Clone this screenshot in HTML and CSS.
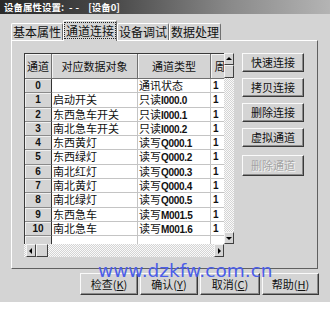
FILE: index.html
```html
<!DOCTYPE html>
<html>
<head>
<meta charset="utf-8">
<link rel="stylesheet" href="styles.css">
</head>
<body>
<div class="window">
  <div class="titlebar"><span>设备属性设置:</span><span class="dash">--</span><span>[设备0]</span></div>
  <div class="tabs">
    <div class="tab">基本属性</div>
    <div class="tab active"><span class="focus">通道连接</span></div>
    <div class="tab">设备调试</div>
    <div class="tab">数据处理</div>
  </div>
  <div class="panel">
    <div class="gridbox">
      <div class="table">
        <div class="h">通道</div><div class="h">对应数据对象</div><div class="h">通道类型</div><div class="h">周期</div>
        <div class="n">0</div><div class="c"></div><div class="c">通讯状态</div><div class="c v">1</div>
        <div class="n">1</div><div class="c">启动开关</div><div class="c">只读<b>I000.0</b></div><div class="c v">1</div>
        <div class="n">2</div><div class="c">东西急车开关</div><div class="c">只读<b>I000.1</b></div><div class="c v">1</div>
        <div class="n">3</div><div class="c">南北急车开关</div><div class="c">只读<b>I000.2</b></div><div class="c v">1</div>
        <div class="n">4</div><div class="c">东西黄灯</div><div class="c">读写<b>Q000.1</b></div><div class="c v">1</div>
        <div class="n">5</div><div class="c">东西绿灯</div><div class="c">读写<b>Q000.2</b></div><div class="c v">1</div>
        <div class="n">6</div><div class="c">南北红灯</div><div class="c">读写<b>Q000.3</b></div><div class="c v">1</div>
        <div class="n">7</div><div class="c">南北黄灯</div><div class="c">读写<b>Q000.4</b></div><div class="c v">1</div>
        <div class="n">8</div><div class="c">南北绿灯</div><div class="c">读写<b>Q000.5</b></div><div class="c v">1</div>
        <div class="n">9</div><div class="c">东西急车</div><div class="c">读写<b>M001.5</b></div><div class="c v">1</div>
        <div class="n">10</div><div class="c">南北急车</div><div class="c">读写<b>M001.6</b></div><div class="c v">1</div>
        <div class="n"></div><div class="c"></div><div class="c"></div><div class="c"></div>
      </div>
      <div class="vscroll">
        <div class="sbtn"><svg width="8" height="10" viewBox="0 0 8 10"><polygon points="1,6 7,6 4,3" fill="#000"/></svg></div>
        <div class="sthumb"></div>
        <div class="strack"></div>
        <div class="sbtn"><svg width="8" height="10" viewBox="0 0 8 10"><polygon points="1,4 7,4 4,7" fill="#000"/></svg></div>
      </div>
      <div class="hscroll">
        <div class="sbtn hb"><svg width="8" height="10" viewBox="0 0 8 10"><polygon points="5,2 5,8 2,5" fill="#000"/></svg></div>
        <div class="sthumb hb2"></div>
        <div class="strack"></div>
        <div class="sbtn hb"><svg width="8" height="10" viewBox="0 0 8 10"><polygon points="3,2 3,8 6,5" fill="#000"/></svg></div>
      </div>
      <div class="corner"></div>
    </div>
    <div class="side">
      <div class="btn">快速连接</div>
      <div class="btn">拷贝连接</div>
      <div class="btn">删除连接</div>
      <div class="btn">虚拟通道</div>
      <div class="btn disabled">删除通道</div>
    </div>
  </div>
  <div class="footer">
    <div class="btn fb w58">检查(<u>K</u>)</div>
    <div class="btn fb w58">确认(<u>Y</u>)</div>
    <div class="btn fb w60">取消(<u>C</u>)</div>
    <div class="btn fb w57">帮助(<u>H</u>)</div>
  </div>
  <div class="watermark">www.dzkfw.com.cn</div>
</div>
</body>
</html>
```

FILE: styles.css
```css
* { box-sizing: border-box; }
body {
  margin: 0;
  background: #fff;
  font-family: "Noto Sans CJK SC", "Liberation Sans", sans-serif;
  color: #111;
}
.window {
  width: 330px;
  height: 302px;
  background: #d4d4d4;
  position: relative;
  overflow: hidden;
}
.titlebar {
  height: 14px;
  background: linear-gradient(90deg, #2a2a2a 0%, #4a4a4a 35%, #8a8a8a 70%, #b4b4b4 100%);
  color: #fff;
  font-size: 9.5px;
  font-weight: bold;
  line-height: 14px;
  padding-left: 4px;
  display: flex;
  gap: 5px;
  white-space: nowrap;
}
.titlebar .dash { letter-spacing: 3px; margin-right: 1px; }
.tabs {
  height: 26px;
  display: flex;
  align-items: flex-end;
  padding-left: 11px;
}
.tab {
  height: 17px;
  padding: 0 1px;
  border: 1px solid #fff;
  border-right-color: #707070;
  border-bottom: none;
  border-radius: 2px 2px 0 0;
  font-size: 12px;
  line-height: 15px;
  white-space: nowrap;
}
.tab.active {
  height: 21px;
  padding: 1px 0 0;
  margin-bottom: -1px;
  position: relative;
  z-index: 1;
  background: #d4d4d4;
}
.focus {
  display: block;
  border: 1px dotted #222;
  padding: 0 1px;
  line-height: 15px;
}
.panel {
  height: 229px;
  margin: 0 12px 0 11px;
  border: 1px solid #fff;
  border-right-color: #606060;
  border-bottom-color: #606060;
  display: flex;
  align-items: flex-start;
  padding: 12px 0 0 12px;
}
.gridbox {
  display: grid;
  grid-template-columns: 200px 10px;
  grid-template-rows: 191px 13px;
}
.table {
  overflow: hidden;
  border-top: 1px solid #3a3a3a;
  border-left: 1px solid #3a3a3a;
  background: #fff;
  display: grid;
  grid-template-columns: 27px 86px 73px 30px;
  grid-template-rows: 25px repeat(12, 14.3px);
  font-size: 11px;
}
.h {
  background: #d4d4d4;
  border-right: 1px solid #707070;
  border-bottom: 1px solid #707070;
  box-shadow: inset 1px 1px #f4f4f4;
  text-align: center;
  line-height: 24px;
  white-space: nowrap;
  overflow: hidden;
}
.n {
  background: #d4d4d4;
  border-right: 1px solid #707070;
  border-bottom: 1px solid #8a8a8a;
  box-shadow: inset 1px 1px #f0f0f0;
  text-align: center;
  font-family: "Liberation Sans", sans-serif;
  font-weight: bold;
  font-size: 10px;
  line-height: 13px;
}
.table > .n:nth-child(4n+1) { border-right-color: #333; }
.c {
  border-right: 1px solid #c4c4c4;
  border-bottom: 1px solid #c4c4c4;
  padding-left: 1px;
  line-height: 13px;
  white-space: nowrap;
  overflow: hidden;
}
.c b, .c.v {
  font-family: "Liberation Sans", sans-serif;
  font-weight: bold;
  font-size: 10px;
  letter-spacing: -0.3px;
}
.c.v { padding-left: 2px; }
.vscroll {
  display: flex;
  flex-direction: column;
  background: repeating-conic-gradient(#d4d4d4 0 25%, #fafafa 0 50%) 0 0 / 2px 2px;
}
.sbtn {
  height: 12px;
  flex: none;
  background: #d4d4d4;
  border: 1px solid;
  border-color: #f4f4f4 #404040 #404040 #f4f4f4;
  display: flex;
  align-items: center;
  justify-content: center;
}
.sbtn svg { display: block; }
.sthumb {
  height: 13px;
  flex: none;
  background: #d4d4d4;
  border: 1px solid;
  border-color: #f4f4f4 #404040 #404040 #f4f4f4;
}
.strack { flex: 1; }
.hscroll {
  display: flex;
  padding-left: 2px;
  background: repeating-conic-gradient(#d4d4d4 0 25%, #fafafa 0 50%) 0 0 / 2px 2px;
}
.hb { width: 10px; height: 13px; }
.hb2 { width: 12px; height: 13px; }
.corner { background: #d4d4d4; }
.side {
  margin-left: 8px;
  width: 62px;
  display: flex;
  flex-direction: column;
  gap: 6px;
}
.btn {
  height: 19px;
  background: #d4d4d4;
  border: 1px solid;
  border-color: #fafafa #3a3a3a #3a3a3a #fafafa;
  box-shadow: inset -1px -1px #8a8a8a;
  font-size: 11px;
  line-height: 17px;
  text-align: center;
  white-space: nowrap;
}
.btn.disabled {
  height: 21px;
  margin-top: 2px;
  line-height: 19px;
  color: #a4a4a4;
  text-shadow: 1px 1px #f6f6f6;
}
.footer {
  display: flex;
  gap: 2px;
  padding-left: 80px;
  margin-top: 4px;
}
.fb { height: 22px; line-height: 20px; }
.fb u { text-decoration: underline; }
.w58 { width: 58px; }
.w60 { width: 60px; }
.w57 { width: 57px; }
.watermark {
  position: absolute;
  left: 98px;
  top: 262px;
  font-family: "DejaVu Sans", sans-serif;
  font-size: 18.5px;
  line-height: 18.5px;
  color: #4b5ee8;
  white-space: nowrap;
}
```
